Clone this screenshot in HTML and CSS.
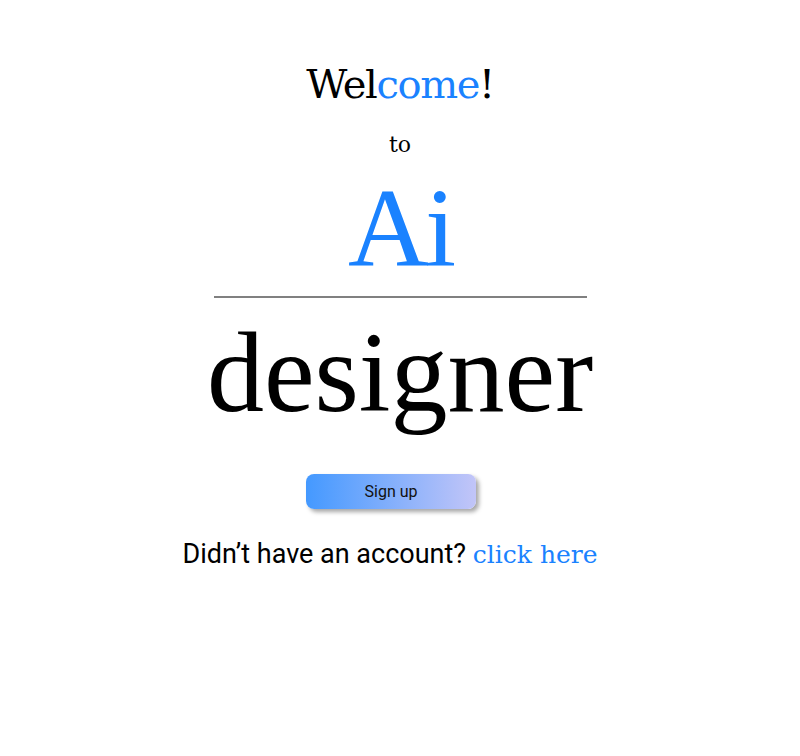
FILE: index.html
```html
<!DOCTYPE html>
<html>
<head>
<meta charset="utf-8">
<link rel="stylesheet" href="styles.css">
</head>
<body>
<main class="page">
  <h1 class="welcome">Wel<span class="blue">come</span>!</h1>
  <p class="to">to</p>
  <div class="ai">Ai</div>
  <hr class="rule">
  <div class="designer">designer</div>
  <button class="signup">Sign up</button>
  <p class="account">Didn’t have an account? <a class="click" href="#">click here</a></p>
</main>
</body>
</html>
```
FILE: styles.css
```css
html, body {
  margin: 0;
  padding: 0;
  background: #ffffff;
}
.page {
  width: 800px;
  height: 756px;
  display: flex;
  flex-direction: column;
  align-items: center;
  font-family: "Liberation Serif", serif;
  color: #000;
}
.blue { color: #1a82ff; }
.welcome {
  margin: 58px 0 0 0;
  font-family: "DejaVu Serif", serif;
  font-weight: normal;
  font-size: 40px;
  line-height: 52px;
  letter-spacing: -1.4px;
}
.to {
  margin: 21px 0 0 0;
  font-family: "DejaVu Serif", serif;
  font-size: 22px;
  line-height: 28px;
}
.ai {
  margin-top: 19px;
  font-size: 112px;
  line-height: 100px;
  height: 100px;
  letter-spacing: -4px;
  color: #1a82ff;
}
.rule {
  width: 373px;
  margin: 18px 0 0 0;
  border: none;
  border-top: 2px solid #808080;
}
.designer {
  margin-top: 15px;
  font-size: 114px;
  line-height: 120px;
  height: 120px;
}
.signup {
  margin: 41px 18px 0 0;
  width: 170px;
  height: 35px;
  border: none;
  border-radius: 8px;
  background: linear-gradient(90deg, #4499ff 0%, #c2c5f8 100%);
  box-shadow: 3px 3px 4px rgba(0, 0, 0, 0.35);
  font-family: Roboto, sans-serif;
  font-size: 16px;
  color: #111;
}
.account {
  margin: 30px 20px 0 0;
  font-family: Roboto, sans-serif;
  font-size: 27px;
  line-height: 30px;
}
.click {
  font-family: "DejaVu Serif", serif;
  font-size: 25px;
  color: #1a82ff;
  text-decoration: none;
}
```
